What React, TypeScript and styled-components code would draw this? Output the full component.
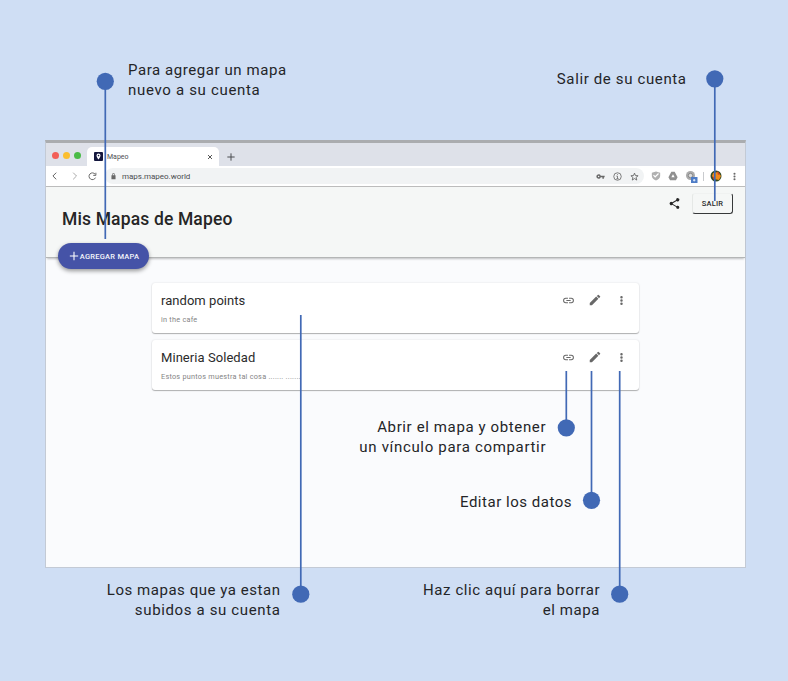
import React from "react";
import styled, { createGlobalStyle } from "styled-components";

const GlobalStyle = createGlobalStyle`
  * { box-sizing: border-box; }
  body { margin: 0; background: #cfdef4; font-family: Roboto, "Open Sans", sans-serif; }
`;

const Page = styled.main`
  position: relative;
  width: 788px;
  height: 681px;
  padding: 140px 42px 0 45px;
  background: #cfdef4;
  overflow: hidden;
`;

const BrowserWindow = styled.section`
  display: flex;
  flex-direction: column;
  width: 701px;
  height: 428px;
  background: #fafbfd;
  border: 1px solid #c3cad5;
  border-top: 3px solid #aaacaf;
`;

const TabStrip = styled.div`
  display: flex;
  align-items: flex-end;
  height: 23px;
  background: #dee1e9;
`;

const TrafficLights = styled.div`
  display: flex;
  gap: 4px;
  padding: 0 6px 7px 6px;
`;

const Light = styled.span<{ $color: string }>`
  width: 7px;
  height: 7px;
  border-radius: 50%;
  background: ${(p) => p.$color};
`;

const Tab = styled.div`
  display: flex;
  align-items: center;
  width: 132px;
  height: 19px;
  padding: 0 6px 0 7px;
  background: #fff;
  border-radius: 5px 5px 0 0;
  font-size: 7px;
  color: #4d4f52;
`;

const TabTitle = styled.span`
  flex: 1;
  padding-left: 4px;
  letter-spacing: 0;
`;

const NewTab = styled.div`
  display: flex;
  padding: 0 0 5px 8px;
`;

const Toolbar = styled.div`
  display: flex;
  align-items: center;
  height: 21px;
  padding: 0 5px 0 4px;
  background: #fff;
  border-bottom: 1px solid #bcbcbc;
`;

const NavIcons = styled.div`
  display: flex;
  align-items: center;
  gap: 9px;
  width: 55px;
`;

const AddressBar = styled.div`
  display: flex;
  align-items: center;
  width: 539px;
  height: 16px;
  padding: 0 5px 0 5px;
  border-radius: 8px;
  background: #f1f3f4;
  font-size: 8px;
  color: #4a4c4f;
`;

const Url = styled.span`
  flex: 1;
  padding-left: 5px;
  letter-spacing: -0.02px;
`;

const AddressIcons = styled.div`
  display: flex;
  align-items: center;
  gap: 8px;
`;

const Extensions = styled.div`
  display: flex;
  align-items: center;
  gap: 7px;
  padding-left: 7px;
`;

const Separator = styled.span`
  width: 1px;
  height: 9px;
  background: #c9cbce;
  margin: 0 -1px 0 -2px;
`;

const AppHeader = styled.header`
  display: flex;
  justify-content: space-between;
  height: 71px;
  padding: 6px 12px 0 16px;
  background: #f5f7f6;
  border-bottom: 1px solid #b4b6b6;
  box-shadow: 0 2px 2px -1px rgba(0, 0, 0, 0.24);
`;

const Title = styled.h1`
  margin: 15px 0 0;
  font-size: 17.5px;
  line-height: 22px;
  font-weight: 500;
  letter-spacing: 0.14px;
  color: #262626;
`;

const HeaderActions = styled.div`
  display: flex;
  align-items: flex-start;
  gap: 11px;
`;

const ShareIcon = styled.div`
  display: flex;
  padding-top: 4px;
`;

const ExitButton = styled.button`
  width: 41px;
  height: 21px;
  padding: 0;
  border: 1px solid #37393a;
  border-top-color: #f0f2f1;
  border-left-color: #e5e8e6;
  border-radius: 3px;
  background: transparent;
  font: 500 7.5px/19px Roboto, sans-serif;
  letter-spacing: 0.2px;
  color: #2b2b2b;
`;

const AddButton = styled.button`
  display: flex;
  align-items: center;
  justify-content: center;
  gap: 1px;
  width: 91px;
  height: 26px;
  margin: -15px 0 0 12px;
  padding: 0 0 0 1px;
  flex: none;
  border: 0;
  border-radius: 13px;
  background: #4553a7;
  box-shadow: 0 2px 4px rgba(0, 0, 0, 0.4);
  z-index: 1;
  font: 500 7.5px Roboto, sans-serif;
  letter-spacing: 0.25px;
  white-space: nowrap;
  color: #f2f3fa;
`;

const MapList = styled.div`
  display: flex;
  flex-direction: column;
  gap: 7px;
  width: 487px;
  margin: 14px 0 0 106px;
`;

const MapCard = styled.article`
  display: flex;
  justify-content: space-between;
  height: 50px;
  padding: 8px 11px 0 9px;
  border-radius: 3px;
  background: #fff;
  box-shadow: 0 1px 1px rgba(0, 0, 0, 0.28), 0 0 2px rgba(0, 0, 0, 0.13);
`;

const MapName = styled.h2<{ $tracking: number }>`
  margin: 0;
  font-size: 13px;
  line-height: 19px;
  font-weight: 400;
  letter-spacing: ${(p) => p.$tracking}px;
  color: #2b2b2b;
`;

const MapNote = styled.p`
  margin: 5px 0 0;
  font-size: 7.3px;
  line-height: 10px;
  letter-spacing: 0.24px;
  color: #858585;
`;

const CardActions = styled.div`
  display: flex;
  align-items: center;
  height: 18px;
  gap: 13px;
`;

const Marker = styled.svg`
  position: absolute;
  inset: 0;
  z-index: 2;
`;

const Caption = styled.div<{ $left: number; $top: number; $width: number; $align: "left" | "right" }>`
  position: absolute;
  z-index: 2;
  left: ${(p) => p.$left}px;
  top: ${(p) => p.$top}px;
  width: ${(p) => p.$width}px;
  display: flex;
  flex-direction: column;
  align-items: ${(p) => (p.$align === "left" ? "flex-start" : "flex-end")};
`;

const CaptionLine = styled.span<{ $tracking: number }>`
  font-size: 15px;
  line-height: 20px;
  letter-spacing: ${(p) => p.$tracking}px;
  margin-right: ${(p) => -p.$tracking}px;
  white-space: nowrap;
  color: #242528;
`;

type Callout = {
  x: number;
  dotY: number;
  end: number;
  left: number;
  top: number;
  width: number;
  align: "left" | "right";
  lines: [string, number][];
};

const callouts: Callout[] = [
  { x: 105.3, dotY: 81.3, end: 239, left: 128, top: 60, width: 170, align: "left",
    lines: [["Para agregar un mapa", 0.57], ["nuevo a su cuenta", 0.68]] },
  { x: 714.8, dotY: 78.8, end: 201, left: 546, top: 69, width: 140, align: "right",
    lines: [["Salir de su cuenta", 0.63]] },
  { x: 566.3, dotY: 427.8, end: 371, left: 345.5, top: 417, width: 200, align: "right",
    lines: [["Abrir el mapa y obtener", 0.62], ["un vínculo para compartir", 0.67]] },
  { x: 591.5, dotY: 500.3, end: 371, left: 431.5, top: 492, width: 140, align: "right",
    lines: [["Editar los datos", 0.52]] },
  { x: 300.8, dotY: 594.2, end: 315, left: 80, top: 580, width: 200, align: "right",
    lines: [["Los mapas que ya estan", 0.54], ["subidos a su cuenta", 0.64]] },
  { x: 619.7, dotY: 594.2, end: 371, left: 399.5, top: 580, width: 200, align: "right",
    lines: [["Haz clic aquí para borrar", 0.58], ["el mapa", 0.58]] },
];

const maps = [
  { name: "random points", note: "in the cafe", tracking: 0.04 },
  { name: "Mineria Soledad", note: "Estos puntos muestra tal cosa ....... .......", tracking: 0.06 },
];

const Stroke = ({ d, size = 10, color = "#666", width = 1.8 }: { d: string; size?: number; color?: string; width?: number }) => (
  <svg width={size} height={size} viewBox="0 0 24 24" fill="none" stroke={color} strokeWidth={width}>
    <path d={d} />
  </svg>
);

const Fill = ({ d, size = 12, color = "#686868" }: { d: string; size?: number; color?: string }) => (
  <svg width={size} height={size} viewBox="0 0 24 24" fill={color}>
    <path d={d} />
  </svg>
);

const paths = {
  link: "M3.9 12c0-1.71 1.39-3.1 3.1-3.1h4V7H7a5 5 0 0 0 0 10h4v-1.9H7A3.1 3.1 0 0 1 3.9 12zM8 13h8v-2H8v2zm9-6h-4v1.900h4a3.100 3.100 0 0 1 0 6.200h-4V17h4a5 5 0 0 0 0-10z",
  pencil: "M3 17.250V21h3.750L17.810 9.940l-3.750-3.750L3 17.250zM20.710 7.040a1 1 0 0 0 0-1.410l-2.340-2.340a1 1 0 0 0-1.410 0l-1.830 1.830 3.750 3.750 1.830-1.830z",
  more: "M12 8.300a2.300 2.300 0 1 0 0-4.600 2.300 2.300 0 0 0 0 4.600zm0 1.400a2.300 2.300 0 1 0 0 4.600 2.300 2.300 0 0 0 0-4.600zm0 6a2.300 2.300 0 1 0 0 4.600 2.300 2.300 0 0 0 0-4.600z",
  share: "M18 16.080c-.76 0-1.440.3-1.960.77L8.910 12.700a3 3 0 0 0 0-1.390l7.050-4.110A3 3 0 1 0 15 5c0 .24.04.47.09.7L8.040 9.810a3 3 0 1 0 0 4.380l7.120 4.160A2.920 2.920 0 1 0 18 16.080z",
  lock: "M18 8h-1V6A5 5 0 0 0 7 6v2H5v13h14V8zM9 8V6a3 3 0 0 1 6 0v2z",
  key: "M12.650 10a6 6 0 1 0 0 4H17v4h4v-4h2v-4zM7 14a2 2 0 1 1 0-4 2 2 0 0 1 0 4z",
  shield: "M12 1 2 4v8c0 5 5 9 10 11 5-2 10-6 10-11V4zm-2 15-5-5 2-2 3 3 7-7 2 2z",
  drive: "M8 2h8l7 13-4 7H5l-4-7zm4 6-4 7h8z",
};

export default function App() {
  return (
    <Page>
      <GlobalStyle />
      <BrowserWindow>
        <TabStrip>
          <TrafficLights>
            <Light $color="#f25f58" />
            <Light $color="#fbbe2f" />
            <Light $color="#4abb47" />
          </TrafficLights>
          <Tab>
            <svg width="9" height="9" viewBox="0 0 9 9">
              <rect width="9" height="9" rx="1" fill="#13163d" />
              <path d="M4.500 1.500a2 2 0 0 1 2 2c0 1.500-2 4-2 4s-2-2.500-2-4a2 2 0 0 1 2-2z" fill="#fff" />
              <circle cx="4.500" cy="3.600" r=".8" fill="#13163d" />
            </svg>
            <TabTitle>Mapeo</TabTitle>
            <Stroke d="M4 4l16 16M20 4L4 20" size={6} color="#444" width={3.6} />
          </Tab>
          <NewTab>
            <Stroke d="M12 1v22M1 12h22" size={8} color="#4b4d50" width={3} />
          </NewTab>
        </TabStrip>
        <Toolbar>
          <NavIcons>
            <Stroke d="M15 4l-8 8 8 8" size={10} width={2.4} />
            <Stroke d="M10 4l8 8-8 8" size={10} width={2} color="#999" />
            <Stroke d="M20 15a9 9 0 1 1-1-9M21 2v7h-7" size={9} width={2.6} />
          </NavIcons>
          <AddressBar>
            <Fill d={paths.lock} size={7} />
            <Url>maps.mapeo.world</Url>
            <AddressIcons>
              <Fill d={paths.key} size={9} />
              <Stroke d="M12 2a10 10 0 1 1 0 20 10 10 0 0 1 0-20zM12 6v2M9 11h3v7M9 18h6" size={9} width={2.2} />
              <Stroke d="M12 3l2.600 6.500 7 .5-5.400 4.500 1.800 7-6-4-6 4 1.800-7L2.400 10l7-.5z" size={9} width={2.4} />
            </AddressIcons>
          </AddressBar>
          <Extensions>
            <Fill d={paths.shield} size={10} color="#b0b0b0" />
            <Fill d={paths.drive} size={10} color="#909090" />
            <svg width="13" height="13" viewBox="0 0 13 13">
              <circle cx="5.500" cy="5.500" r="4.500" fill="#aaa" />
              <circle cx="5.500" cy="5.500" r="2.200" fill="#ddd" stroke="#888" />
              <rect x="6" y="7" width="6.500" height="6" fill="#4e7cc6" />
              <path d="M9.200 9v2.400M8 10.200h2.400" stroke="#e7effb" />
            </svg>
            <Separator />
            <svg width="12" height="12" viewBox="0 0 12 12">
              <circle cx="6" cy="6" r="5.500" fill="#344b23" />
              <path d="M3 3l5-1 3 4-2 4-5-1-2-3z" fill="#f18b19" />
              <path d="M7 1l3 3-2 1zM2 6l3 2-1 2z" fill="#d6402a" />
            </svg>
            <Fill d={paths.more} size={11} />
          </Extensions>
        </Toolbar>
        <AppHeader>
          <Title>Mis Mapas de Mapeo</Title>
          <HeaderActions>
            <ShareIcon><Fill d={paths.share} size={13} color="#252525" /></ShareIcon>
            <ExitButton>SALIR</ExitButton>
          </HeaderActions>
        </AppHeader>
        <AddButton>
          <Stroke d="M12 2v20M2 12h20" size={10} color="#fff" width={2.6} />
          AGREGAR MAPA
        </AddButton>
        <MapList>
          {maps.map((m) => (
            <MapCard key={m.name}>
              <div>
                <MapName $tracking={m.tracking}>{m.name}</MapName>
                <MapNote>{m.note}</MapNote>
              </div>
              <CardActions>
                <Fill d={paths.link} size={13} />
                <Fill d={paths.pencil} size={14} />
                <Fill d={paths.more} size={13} />
              </CardActions>
            </MapCard>
          ))}
        </MapList>
      </BrowserWindow>
      <Marker width="788" height="681" viewBox="0 0 788 681" stroke="#4169b5" strokeWidth="1.700">
        {callouts.map((c) => (
          <g key={c.x}>
            <line x1={c.x} x2={c.x} y1={c.dotY} y2={c.end} />
            <circle cx={c.x} cy={c.dotY} r="8.600" fill="#4169b5" stroke="none" />
          </g>
        ))}
      </Marker>
      {callouts.map((c) => (
        <Caption key={c.x} $left={c.left} $top={c.top} $width={c.width} $align={c.align}>
          {c.lines.map(([text, tracking]) => (
            <CaptionLine key={text} $tracking={tracking}>{text}</CaptionLine>
          ))}
        </Caption>
      ))}
    </Page>
  );
}
